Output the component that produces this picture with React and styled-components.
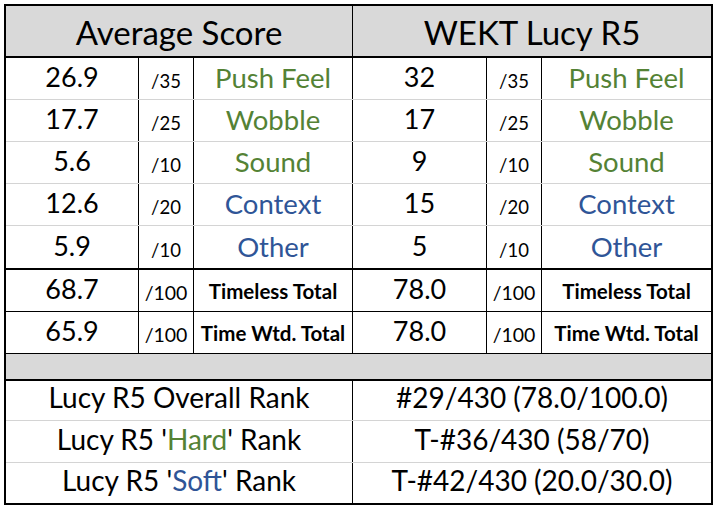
import React from 'react'
import styled, { createGlobalStyle } from 'styled-components'

const GlobalStyle = createGlobalStyle`
  * { box-sizing: border-box; }
  body {
    margin: 0;
    background: #ffffff;
    font-family: Lato, "Open Sans", sans-serif;
    color: #000000;
  }
`

const GREEN = '#548235'
const BLUE = '#2f5597'

const scores = [
  { avg: '26.9', max: '/35', label: 'Push Feel', tone: GREEN, mine: '32' },
  { avg: '17.7', max: '/25', label: 'Wobble', tone: GREEN, mine: '17' },
  { avg: '5.6', max: '/10', label: 'Sound', tone: GREEN, mine: '9' },
  { avg: '12.6', max: '/20', label: 'Context', tone: BLUE, mine: '15' },
  { avg: '5.9', max: '/10', label: 'Other', tone: BLUE, mine: '5' },
]

const totals = [
  { avg: '68.7', label: 'Timeless Total', mine: '78.0' },
  { avg: '65.9', label: 'Time Wtd. Total', mine: '78.0' },
]

const ranks = [
  { word: null, tone: null, value: '#29/430 (78.0/100.0)' },
  { word: 'Hard', tone: GREEN, value: 'T-#36/430 (58/70)' },
  { word: 'Soft', tone: BLUE, value: 'T-#42/430 (20.0/30.0)' },
]

function App() {
  return (
    <>
      <GlobalStyle />
      <Sheet>
        <Row $split $height={52} $line="2px solid #000">
          <Head>Average Score</Head>
          <Head $last>WEKT Lucy R5</Head>
        </Row>

        {scores.map((s, i) => (
          <Row
            key={s.label}
            $height={i === scores.length - 1 ? 44 : 42}
            $line={i === scores.length - 1 ? '2px solid #000' : '1px solid #d4d4d4'}
          >
            <Cell $size={27}>{s.avg}</Cell>
            <Cell $size={18.5}>{s.max}</Cell>
            <Cell $size={27.5} $color={s.tone}>{s.label}</Cell>
            <Cell $size={27}>{s.mine}</Cell>
            <Cell $size={18.5}>{s.max}</Cell>
            <Cell $size={27.5} $color={s.tone} $last>{s.label}</Cell>
          </Row>
        ))}

        {totals.map((t) => (
          <Row key={t.label} $height={42} $line="1px solid #000">
            <Cell $size={27}>{t.avg}</Cell>
            <Cell $size={19.5}>/100</Cell>
            <Cell $size={20.5} $bold>{t.label}</Cell>
            <Cell $size={27}>{t.mine}</Cell>
            <Cell $size={19.5}>/100</Cell>
            <Cell $size={20.5} $bold $last>{t.label}</Cell>
          </Row>
        ))}

        <Band />

        {ranks.map((r, i) => (
          <Row
            key={r.value}
            $split
            $height={i === 1 ? 42 : 40}
            $line={i === ranks.length - 1 ? 'none' : '1px solid #d4d4d4'}
          >
            <Cell $size={28}>
              {r.word ? (
                <span>
                  Lucy R5 '<Tone $color={r.tone}>{r.word}</Tone>' Rank
                </span>
              ) : (
                'Lucy R5 Overall Rank'
              )}
            </Cell>
            <Cell $size={28} $last>{r.value}</Cell>
          </Row>
        ))}
      </Sheet>
    </>
  )
}

export default App

const Sheet = styled.div`
  margin: 4px;
  width: 709px;
  border: 2px solid #000;
  display: flex;
  flex-direction: column;
`

const Row = styled.div`
  display: grid;
  grid-template-columns: ${(p) =>
    p.$split ? '347px 358px' : '133px 55px 159px 134px 55px 169px'};
  height: ${(p) => p.$height}px;
  border-bottom: ${(p) => p.$line};
`

const Head = styled.div`
  display: flex;
  align-items: center;
  justify-content: center;
  background: #d9d9d9;
  font-size: 33px;
  padding-top: 2px;
  border-right: ${(p) => (p.$last ? 'none' : '1px solid #000')};
`

const Cell = styled.div`
  display: flex;
  align-items: flex-end;
  justify-content: center;
  padding-bottom: 8px;
  white-space: nowrap;
  font-size: ${(p) => p.$size}px;
  line-height: ${(p) => 6 + 0.774 * p.$size}px;
  font-weight: ${(p) => (p.$bold ? 700 : 400)};
  color: ${(p) => p.$color || '#000'};
  border-right: ${(p) => (p.$last ? 'none' : '1px solid #000')};
`

const Tone = styled.span`
  color: ${(p) => p.$color};
`

const Band = styled.div`
  height: 27px;
  background: #d9d9d9;
  border-bottom: 2px solid #000;
`
